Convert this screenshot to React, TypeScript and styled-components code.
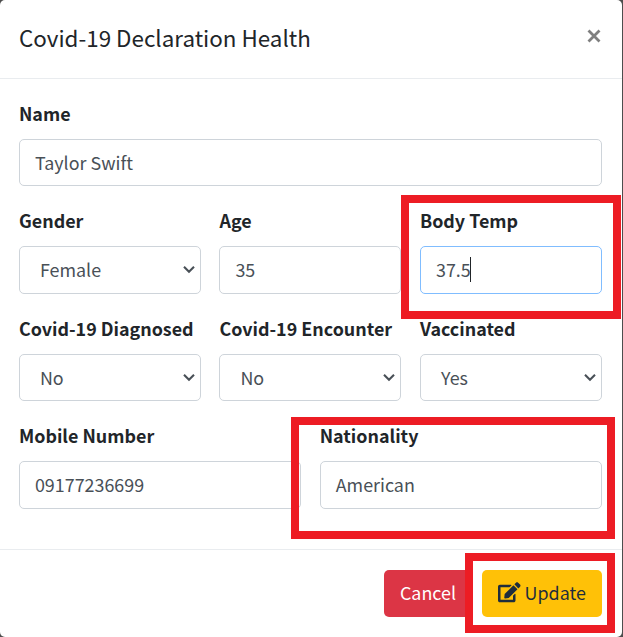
import React from "react";
import styled, { createGlobalStyle, css } from "styled-components";
import { FaEdit } from "react-icons/fa";

const GlobalStyle = createGlobalStyle`
  *, *::before, *::after { box-sizing: border-box; }
  body {
    margin: 0;
    background: #4d4d4d;
    color: #212529;
    font-family: "Noto Sans CJK SC", "Noto Sans", sans-serif;
    font-size: 17.9px;
    line-height: 28px;
    overflow: hidden;
  }
`;

const Modal = styled.div`
  position: relative;
  width: 622px;
  height: 637px;
  display: flex;
  flex-direction: column;
  background: #fff;
  border-radius: 5px;
`;

const Header = styled.header`
  display: flex;
  justify-content: space-between;
  align-items: flex-start;
  height: 79px;
  padding: 19px 19px 20px;
  border-bottom: 1px solid #e9ecef;
`;

const Title = styled.h5`
  margin: 0;
  font-size: 22.4px;
  font-weight: 400;
  line-height: 37px;
`;

const CloseButton = styled.button`
  display: flex;
  margin: 10px 2px 0 0;
  padding: 0;
  border: 0;
  background: none;
  color: #7f7f7f;
`;

const Body = styled.main`
  display: flex;
  flex-direction: column;
  gap: 20px;
  height: 470px;
  padding: 19.9px 20.05px 20px 18.95px;
`;

const Row = styled.div<{ $columns: number }>`
  display: grid;
  grid-template-columns: repeat(${(p) => p.$columns}, minmax(0, 1fr));
  gap: 18.52px;
`;

const Field = styled.div`
  display: flex;
  flex-direction: column;
  gap: 10px;
`;

const Label = styled.label`
  height: 30px;
  font-weight: 700;
  white-space: nowrap;
`;

const Control = styled.div<{ $focused?: boolean; $select?: boolean }>`
  display: flex;
  align-items: center;
  height: 47.5px;
  padding: 0 15px 1.8px;
  border: 1px solid ${(p) => (p.$focused ? "#80bdff" : "#ced4da")};
  border-radius: 5px;
  background: #fff;
  color: #495057;
  ${(p) =>
    p.$select &&
    css`
      justify-content: space-between;
      padding: 0 4px 1.8px 20px;
    `}
`;

const Caret = styled.span`
  width: 1px;
  height: 25px;
  margin-left: -1px;
  background: #212529;
`;

const Footer = styled.footer`
  display: flex;
  justify-content: flex-end;
  gap: 10px;
  height: 88px;
  padding: 20px 20px 20px 0;
  border-top: 1px solid #e9ecef;
`;

const Button = styled.button<{ $tone: "danger" | "warning" }>`
  display: flex;
  align-items: center;
  justify-content: center;
  gap: 4px;
  width: ${(p) => (p.$tone === "danger" ? 88 : 120)}px;
  height: 47px;
  padding: 0 0 3px;
  border: 0;
  border-radius: 5px;
  background: ${(p) => (p.$tone === "danger" ? "#dc3545" : "#ffc107")};
  color: ${(p) => (p.$tone === "danger" ? "#fff" : "#1f2d3d")};
  font: inherit;
`;

const Highlight = styled.div<{ $x: number; $y: number; $w: number; $h: number }>`
  position: absolute;
  left: ${(p) => p.$x}px;
  top: ${(p) => p.$y}px;
  width: ${(p) => p.$w}px;
  height: ${(p) => p.$h}px;
  border: 8px solid #ed1c24;
  pointer-events: none;
`;

const Chevron = () => (
  <svg width="14" height="10" viewBox="0 0 14 10" fill="none" aria-hidden="true">
    <path d="M2 2.7 7 7.7 12 2.7" stroke="#495057" strokeWidth="2.1" />
  </svg>
);

type ItemProps = { label: string; value: string; select?: boolean; focused?: boolean };

const Item = ({ label, value, select, focused }: ItemProps) => (
  <Field>
    <Label>{label}</Label>
    <Control $select={select} $focused={focused}>
      <span>{value}</span>
      {focused && <Caret />}
      {select && <Chevron />}
    </Control>
  </Field>
);

export default function App() {
  return (
    <>
      <GlobalStyle />
      <Modal role="dialog">
        <Header>
          <Title>Covid-19 Declaration Health</Title>
          <CloseButton aria-label="Close">
            <svg width="14" height="14" viewBox="0 0 14 14" aria-hidden="true">
              <path d="M1.5 1.5 12.5 12.5M12.5 1.5 1.5 12.5" stroke="currentColor" strokeWidth="2.8" />
            </svg>
          </CloseButton>
        </Header>
        <Body>
          <Row $columns={1}>
            <Item label="Name" value="Taylor Swift" />
          </Row>
          <Row $columns={3}>
            <Item label="Gender" value="Female" select />
            <Item label="Age" value="35" />
            <Item label="Body Temp" value="37.5" focused />
          </Row>
          <Row $columns={3}>
            <Item label="Covid-19 Diagnosed" value="No" select />
            <Item label="Covid-19 Encounter" value="No" select />
            <Item label="Vaccinated" value="Yes" select />
          </Row>
          <Row $columns={2}>
            <Item label="Mobile Number" value="09177236699" />
            <Item label="Nationality" value="American" />
          </Row>
        </Body>
        <Footer>
          <Button $tone="danger">Cancel</Button>
          <Button $tone="warning">
            <FaEdit size={22.5} />
            Update
          </Button>
        </Footer>
        <Highlight $x={401} $y={195} $w={220} $h={124} />
        <Highlight $x={291} $y={417} $w={324} $h={122} />
        <Highlight $x={465} $y={553} $w={150} $h={80} />
      </Modal>
    </>
  );
}
